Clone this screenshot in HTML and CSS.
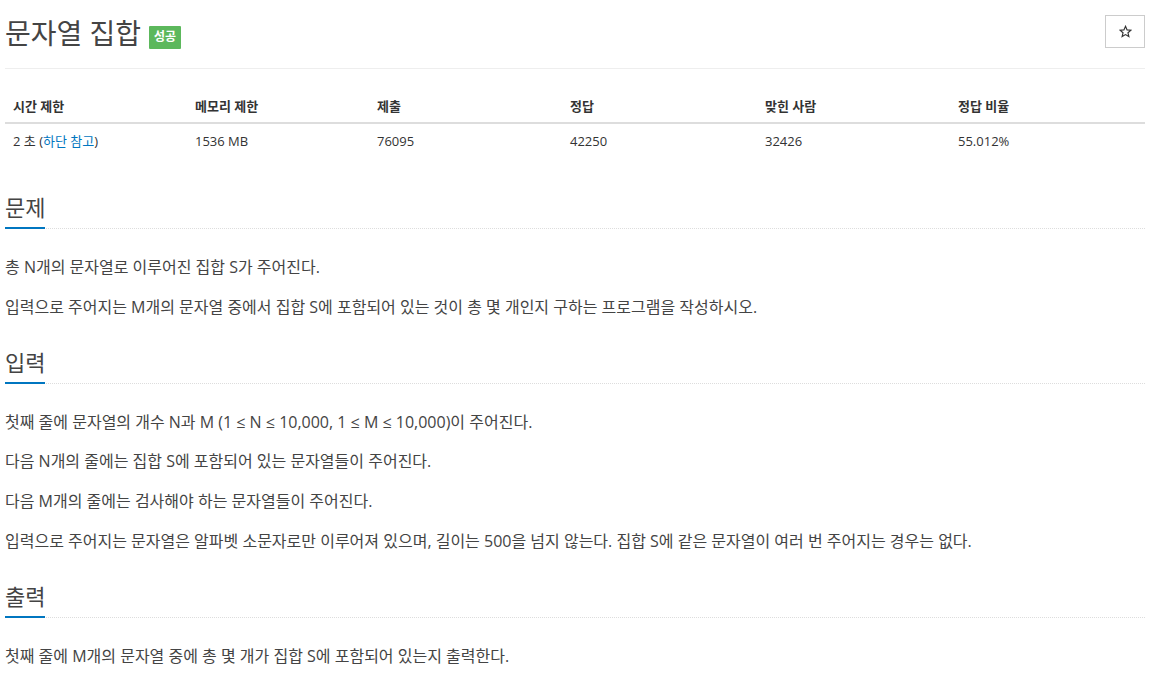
FILE: index.html
```html
<!DOCTYPE html>
<html lang="ko">
<head>
<meta charset="utf-8">
<title>문자열 집합</title>
<link rel="stylesheet" href="styles.css">
</head>
<body>
<div class="page">
  <div class="page-header">
    <div class="title-wrap">
      <h1 class="title">문자열 집합</h1>
      <span class="badge">성공</span>
    </div>
    <button class="star-btn" type="button" aria-label="즐겨찾기">
      <svg class="star-icon" width="13" height="13" viewBox="0 0 24 24"><path d="M12 2.5l2.9 6.6 7.1.6-5.4 4.7 1.6 7-6.2-3.7-6.2 3.7 1.6-7L2 9.7l7.1-.6z" fill="none" stroke="#333" stroke-width="2.2" stroke-linejoin="miter"/></svg>
    </button>
  </div>

  <table class="info-table">
    <colgroup>
      <col class="c1"><col class="c2"><col class="c3"><col class="c4"><col class="c5"><col class="c6">
    </colgroup>
    <thead>
      <tr>
        <th>시간 제한</th>
        <th>메모리 제한</th>
        <th>제출</th>
        <th>정답</th>
        <th>맞힌 사람</th>
        <th>정답 비율</th>
      </tr>
    </thead>
    <tbody>
      <tr>
        <td>2 초 (<a class="link" href="#">하단 참고</a>)</td>
        <td>1536 MB</td>
        <td>76095</td>
        <td>42250</td>
        <td>32426</td>
        <td>55.012%</td>
      </tr>
    </tbody>
  </table>

  <section class="section first">
    <div class="headline"><h2 class="section-title">문제</h2></div>
    <div class="section-body">
      <p>총 N개의 문자열로 이루어진 집합 S가 주어진다.</p>
      <p>입력으로 주어지는 M개의 문자열 중에서 집합 S에 포함되어 있는 것이 총 몇 개인지 구하는 프로그램을 작성하시오.</p>
    </div>
  </section>

  <section class="section">
    <div class="headline"><h2 class="section-title">입력</h2></div>
    <div class="section-body">
      <p>첫째 줄에 문자열의 개수 N과 M (1 ≤ N ≤ 10,000, 1 ≤ M ≤ 10,000)이 주어진다.</p>
      <p>다음 N개의 줄에는 집합 S에 포함되어 있는 문자열들이 주어진다.</p>
      <p>다음 M개의 줄에는 검사해야 하는 문자열들이 주어진다.</p>
      <p>입력으로 주어지는 문자열은 알파벳 소문자로만 이루어져 있으며, 길이는 500을 넘지 않는다. 집합 S에 같은 문자열이 여러 번 주어지는 경우는 없다.</p>
    </div>
  </section>

  <section class="section">
    <div class="headline"><h2 class="section-title">출력</h2></div>
    <div class="section-body">
      <p>첫째 줄에 M개의 문자열 중에 총 몇 개가 집합 S에 포함되어 있는지 출력한다.</p>
    </div>
  </section>
</div>
</body>
</html>
```

FILE: styles.css
```css
html, body {
  margin: 0;
  padding: 0;
  background: #fff;
}

body {
  font-family: "Open Sans", "Noto Sans CJK KR", sans-serif;
  color: #333;
  font-size: 13px;
}

.page {
  width: 1140px;
  padding: 0 7px 0 5px;
}

.page-header {
  display: flex;
  justify-content: space-between;
  align-items: flex-start;
  padding-top: 15px;
  padding-bottom: 17px;
  border-bottom: 1px solid #eee;
}

.title-wrap {
  display: flex;
  align-items: flex-start;
}

.title {
  margin: 0;
  font-size: 28px;
  line-height: 36px;
  font-weight: 400;
  color: #444;
}

.badge {
  margin-left: 8px;
  margin-top: 11px;
  background: #5cb85c;
  color: #fff;
  font-size: 12px;
  font-weight: 700;
  line-height: 12px;
  padding: 5px 5px 6px;
  border-radius: 1px;
}

.star-btn {
  display: flex;
  align-items: center;
  justify-content: center;
  width: 40px;
  height: 33px;
  margin: 0;
  padding: 0;
  background: #fff;
  border: 1px solid #ccc;
}

.star-icon {
  display: block;
}

.info-table {
  margin-top: 18px;
  width: 1140px;
  border-collapse: collapse;
  table-layout: fixed;
}

.c1 { width: 182px; }
.c2 { width: 182px; }
.c3 { width: 193px; }
.c4 { width: 195px; }
.c5 { width: 193px; }
.c6 { width: 195px; }

.info-table th,
.info-table td {
  text-align: left;
  padding: 8px;
  line-height: 20px;
  font-size: 13px;
}

.info-table th {
  font-weight: 700;
  color: #333;
  border-bottom: 2px solid #ddd;
  padding-top: 9px;
  padding-bottom: 6px;
}

.info-table td {
  color: #333;
  padding-top: 7px;
}

.link {
  color: #0076c0;
  text-decoration: none;
}

.section {
  margin-top: 28px;
}

.section.first {
  margin-top: 33px;
}

.headline {
  border-bottom: 1px dotted #ddd;
}

.section-title {
  display: inline-block;
  margin: 0 0 -1px;
  font-size: 22px;
  line-height: 30px;
  font-weight: 400;
  color: #444;
  padding-bottom: 5px;
  border-bottom: 2px solid #0076c0;
}

.section-body {
  padding-top: 26px;
}

.section-body p {
  margin: 0 0 15.7px;
  font-size: 16px;
  line-height: 24px;
  color: #444;
}

.section-body p:last-child {
  margin-bottom: 0;
}
```
